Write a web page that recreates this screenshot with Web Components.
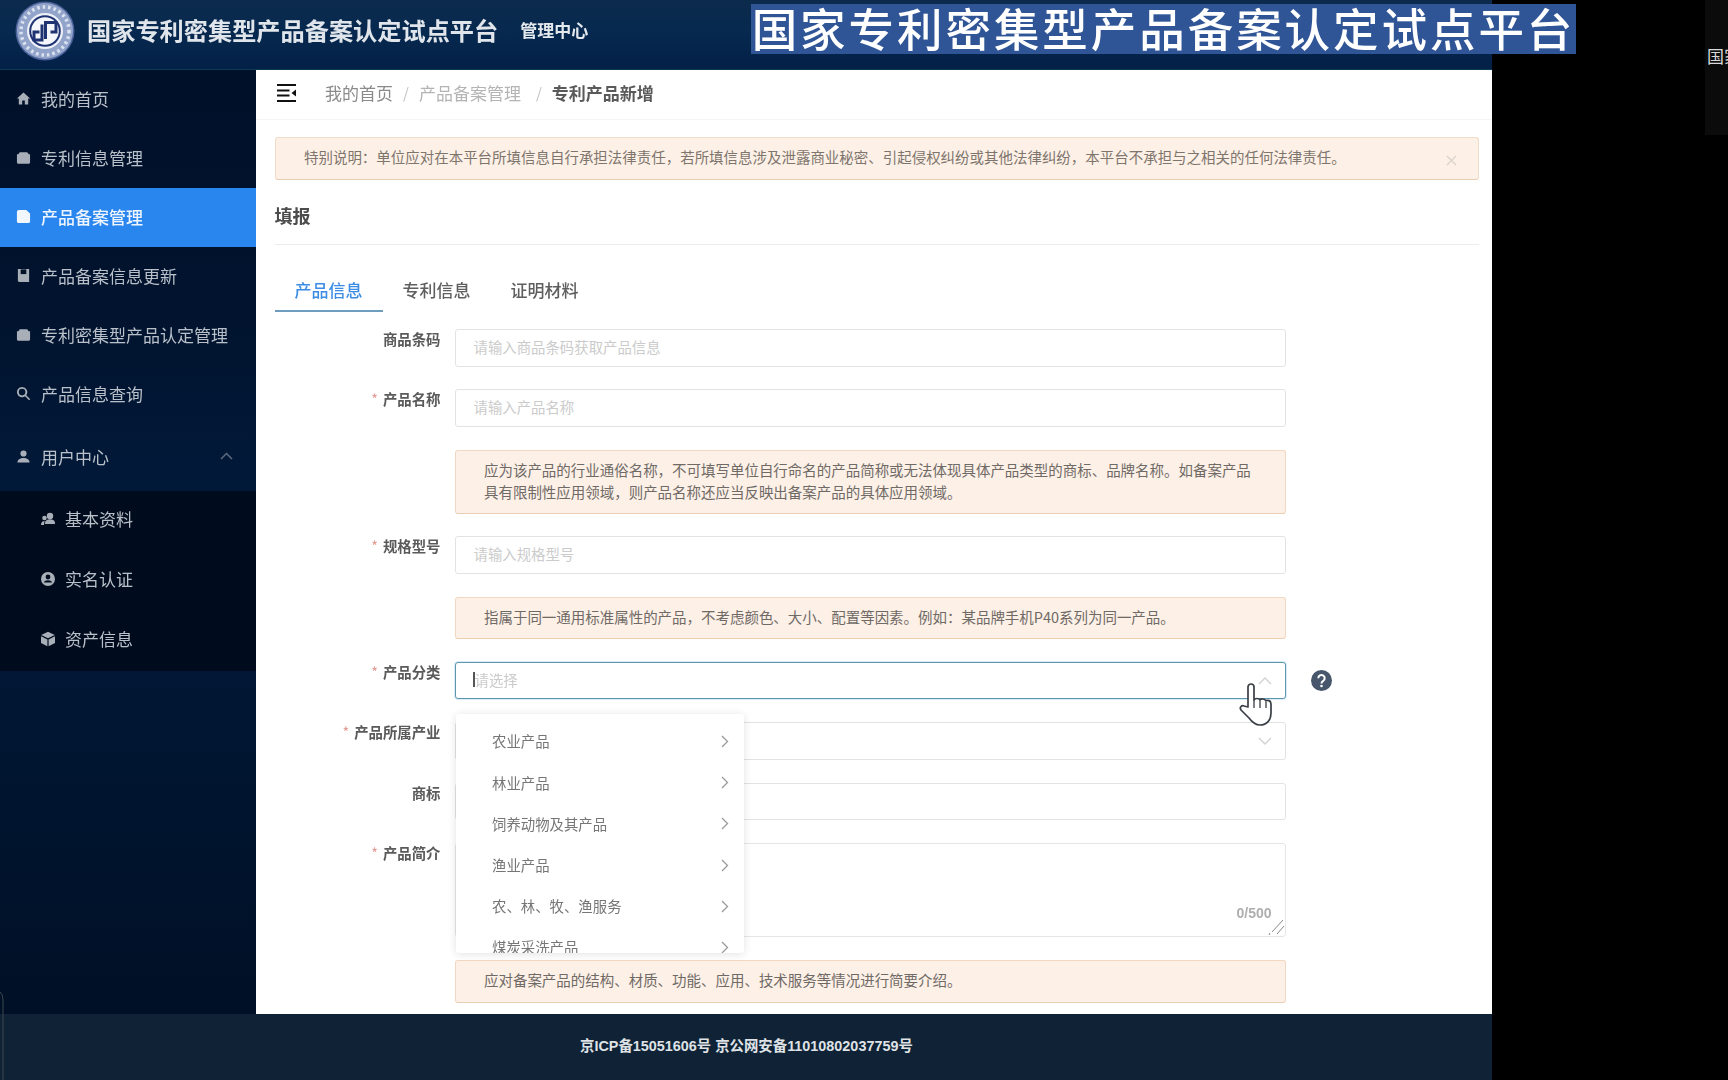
<!DOCTYPE html>
<html lang="zh-CN"><head><meta charset="utf-8"><title>专利产品新增</title>
<style>
html,body{margin:0;padding:0;background:#000;height:100%;overflow:hidden}
body{font-family:"Noto Sans CJK SC","Noto Sans",sans-serif}
</style></head>
<body>
<app-shell>
  <top-bar slot="top"></top-bar>
  <side-nav slot="side">
    <nav-item icon="home">我的首页</nav-item>
    <nav-item icon="box">专利信息管理</nav-item>
    <nav-item icon="doc" active>产品备案管理</nav-item>
    <nav-item icon="book">产品备案信息更新</nav-item>
    <nav-item icon="box">专利密集型产品认定管理</nav-item>
    <nav-item icon="search">产品信息查询</nav-item>
    <nav-item icon="user" tall open>用户中心</nav-item>
    <nav-group>
      <nav-item icon="users" sub>基本资料</nav-item>
      <nav-item icon="account" sub>实名认证</nav-item>
      <nav-item icon="cube" sub>资产信息</nav-item>
    </nav-group>
  </side-nav>
  <main-pane slot="main">
    <bread-bar></bread-bar>
    <notice-bar>特别说明&#xFF1A;单位应对在本平台所填信息自行承担法律责任&#xFF0C;若所填信息涉及泄露商业秘密、引起侵权纠纷或其他法律纠纷&#xFF0C;本平台不承担与之相关的任何法律责任。</notice-bar>
    <section-title>填报</section-title>
    <tab-strip></tab-strip>
    <form-stack>
      <form-row label="商品条码"><text-field placeholder="请输入商品条码获取产品信息"></text-field></form-row>
      <form-row label="产品名称" required><text-field placeholder="请输入产品名称"></text-field></form-row>
      <form-row><hint-box style="height:64px">应为该产品的行业通俗名称&#xFF0C;不可填写单位自行命名的产品简称或无法体现具体产品类型的商标、品牌名称。如备案产品具有限制性应用领域&#xFF0C;则产品名称还应当反映出备案产品的具体应用领域。</hint-box></form-row>
      <form-row label="规格型号" required><text-field placeholder="请输入规格型号"></text-field></form-row>
      <form-row><hint-box style="height:42.5px">指属于同一通用标准属性的产品&#xFF0C;不考虑颜色、大小、配置等因素。例如&#xFF1A;某品牌手机P40系列为同一产品。</hint-box></form-row>
      <form-row label="产品分类" required help><text-field placeholder="请选择" focused chevron="up"></text-field></form-row>
      <form-row label="产品所属产业" required><text-field chevron="down"></text-field></form-row>
      <form-row label="商标"><text-field></text-field></form-row>
      <form-row label="产品简介" required><area-field></area-field></form-row>
      <form-row><hint-box style="height:43px">应对备案产品的结构、材质、功能、应用、技术服务等情况进行简要介绍。</hint-box></form-row>
    </form-stack>
    <cascader-panel></cascader-panel>
    <hand-cursor></hand-cursor>
  </main-pane>
  <site-footer slot="foot">京ICP备15051606号 京公网安备11010802037759号</site-footer>
  <caption-strip slot="over">国家专利密集型产品备案认定试点平台</caption-strip>
  <side-peek slot="over"></side-peek>
</app-shell>
<script>
const FONT='"Noto Sans CJK SC","Noto Sans",sans-serif';
const CONDENSED='"Liberation Sans","Noto Sans CJK SC",sans-serif';
function def(name,html){
  customElements.define(name,class extends HTMLElement{
    constructor(){super();this.attachShadow({mode:'open'});
      if(typeof html!=='function')this.shadowRoot.innerHTML=html;}
    connectedCallback(){
      if(typeof html==='function'&&!this._d){this._d=1;this.shadowRoot.innerHTML=html(this);}
    }
  });
}
const ICONS={
 home:'<path d="M8 1.500 1 8h2v6.500h3.600V10h2.800v4.500H13V8h2z"/>',
 box:'<path d="M2.500 4.500 4 2.500h8l1.500 2H15V13a1.600 1.600 0 0 1-1.600 1.600H2.600A1.600 1.600 0 0 1 1 13V4.500z"/>',
 doc:'<path d="M3 1h8l4 3.800V13a2 2 0 0 1-2 2H3a2 2 0 0 1-2-2V3a2 2 0 0 1 2-2z"/>',
 book:'<path d="M2 1h12v14H4a2 2 0 0 1-2-2z"/><rect x="5" y="1.500" width="6" height="5" fill="#021129"/>',
 search:'<path fill-rule="evenodd" d="M6.500 1a5.500 5.500 0 0 1 4.400 8.800l4.300 4.200-1.300 1.300-4.200-4.300A5.500 5.500 0 1 1 6.500 1zm0 2a3.500 3.500 0 1 0 0 7 3.500 3.500 0 0 0 0-7z"/>',
 user:'<circle cx="8" cy="4.800" r="3.300"/><path d="M1.500 14.500c0-3.300 2.800-5 6.500-5s6.500 1.700 6.500 5z"/>',
 users:'<circle cx="10" cy="5" r="3.200"/><path d="M5 12c0-2.600 2.200-3.800 5-3.800s5 1.200 5 3.800v1H5z"/><circle cx="4.500" cy="7" r="2.300"/><path d="M1 14c0-2.500 1.400-4 3.500-4L4 14z"/>',
 account:'<path fill-rule="evenodd" d="M8 1a7 7 0 1 1 0 14A7 7 0 0 1 8 1zm0 2.600a2.400 2.400 0 1 0 0 4.800 2.400 2.400 0 0 0 0-4.800zM3.800 11.600h8.400C11.500 10 10 9.300 8 9.300s-3.500.7-4.200 2.300z"/>',
 cube:'<path d="M8 .8 14.800 4 8 7.300 1.200 4z"/><path d="M1 5.200 7.400 8.400v6.800L1 12z"/><path d="M15 5.200 8.600 8.400v6.800L15 12z"/>'
};
def('app-shell',`<style>
:host{display:grid;width:1492px;height:1080px;grid-template-columns:255.5px 1fr;grid-template-rows:70px 944px 66px;position:relative;filter:blur(.4px)}
::slotted([slot=top]){grid-column:1/3}
::slotted([slot=foot]){grid-column:1/3}
</style><slot name="top"></slot><slot name="side"></slot><slot name="main"></slot><slot name="foot"></slot><slot name="over"></slot>
<svg style="position:absolute;left:0;top:990px" width="5" height="90"><path d="M0 2Q3 4 3 10V90" fill="none" stroke="#3c4650"/></svg>`);
def('top-bar',`<style>
:host{display:flex;align-items:center;background:linear-gradient(180deg,#0c2a4c 0%,#07294f 45%,#032047 100%);color:#e8edf2;padding:0 0 8px 15px;box-sizing:border-box;border-bottom:1px solid #0b3a55}
.t{font:700 24.200px/1 ${FONT};margin-left:12px;white-space:nowrap;color:#dfe5ea}
.s{font:700 17px/1 ${FONT};margin:0 0 3px 22px;white-space:nowrap;color:#e4e9ee}
svg{flex:none}
</style>
<svg width="60" height="60" viewBox="0 0 60 60"><circle cx="30" cy="30" r="29.500" fill="#4a6199"/><circle cx="30" cy="30" r="28" fill="#93a4cb"/><circle cx="30" cy="30" r="24" fill="none" stroke="#dbe2f0" stroke-width="3.500" stroke-dasharray="2.500 3"/><circle cx="30" cy="30" r="18" fill="#eef1f8"/><circle cx="30" cy="30" r="15.800" fill="#1f3272"/><circle cx="30" cy="30" r="13.800" fill="#f4f6fb"/><path d="M30.500 38V21.500H41V31H35.500M27 23.500V39H19V31H24.500" fill="none" stroke="#1f3272" stroke-width="3"/></svg>
<span class="t">国家专利密集型产品备案认定试点平台</span><span class="s">管理中心</span>`);
def('side-nav',`<style>
:host{display:block;background:linear-gradient(180deg,#011029 0%,#01132e 25%,#011a3b 48%,#001026 100%);overflow:hidden}
</style><slot></slot>`);
def('nav-group',`<style>:host{display:block;background:#000c1d}</style><slot></slot>`);
def('nav-item',h=>{
 const sub=h.hasAttribute('sub'),act=h.hasAttribute('active'),tall=h.hasAttribute('tall'),open=h.hasAttribute('open');
 const ic=ICONS[h.getAttribute('icon')]||'';
 return `<style>
:host{display:flex;align-items:center;height:${tall?67:sub?60:59}px;box-sizing:border-box;padding:0 0 ${sub?5:2}px ${sub?40:16}px;color:${act?'#eef5fe':'#b9c0c9'};background:${act?'#2a86ef':'transparent'};font:${act?500:400} 17px/1 ${FONT};position:relative;white-space:nowrap}
svg.i{width:${sub?16:15}px;height:${sub?16:15}px;fill:${act?'#f2f7fd':'#a9afb8'};flex:none;margin-right:${sub?9:10}px}
svg.c{position:absolute;right:23px;top:28px}
</style><svg class="i" viewBox="0 0 16 16">${ic}</svg><slot></slot>${open?'<svg class="c" width="13" height="8" viewBox="0 0 13 8"><path d="M1 7l5.500-5.500L12 7" fill="none" stroke="#5b6a80" stroke-width="1.500"/></svg>':''}`;
});
def('main-pane',`<style>
:host{display:block;background:#fff;position:relative;overflow:hidden;padding:0 13px 0 19px;box-sizing:border-box}
</style><slot></slot>`);
def('bread-bar',`<style>
:host{display:flex;align-items:center;height:50px;margin:0 -13px 0 -19px;padding:0 0 5px 21.500px;border-bottom:1px solid #f5f5f5;font:400 17px/1 ${FONT};color:#8b8b8b;white-space:nowrap;box-sizing:border-box}
svg{margin:2px 29px 0 0;flex:none}
.m{color:#b4b4b4}.sep{color:#c2c2c2;margin:0 10px;font-size:15px}.sep2{margin:0 10px 0 15px}
b{font-weight:700;color:#5a5a5a}
</style>
<svg width="19" height="19" viewBox="0 0 19 19"><path d="M0 1h19M0 6.500h12.500M0 11.500h12.500M0 17h19" stroke="#111" stroke-width="1.800" fill="none"/><path d="M19 5.500v7l-4.500-3.500z" fill="#111"/></svg>
<span>我的首页</span><span class="sep">/</span><span class="m">产品备案管理</span><span class="sep sep2">/</span><b>专利产品新增</b>`);
def('notice-bar',`<style>
:host{display:flex;align-items:center;height:43px;margin:16.500px 0 0;padding:0 22px 2px 28.500px;box-sizing:border-box;background:#fdf0e6;border:1px solid #f1dcc8;border-bottom-color:#e8cdb4;border-radius:3px;font:400 14.480px/1 ${FONT};color:#7e756d;white-space:nowrap;position:relative}
i{position:absolute;right:21px;top:15px;width:11px;height:11px}
</style><slot></slot><i><svg width="11" height="11" viewBox="0 0 11 11"><path d="M1 1l9 9M10 1l-9 9" stroke="#d9d2cb" stroke-width="1.200"/></svg></i>`);
def('section-title',`<style>
:host{display:block;height:65px;box-sizing:border-box;border-bottom:1px solid #ececec;padding-top:25px;font:700 18px/1.200 ${FONT};color:#4c4c4c}
</style><slot></slot>`);
def('tab-strip',`<style>
:host{display:flex;height:66.500px;box-sizing:border-box;padding-top:32px;font:500 17px/26px ${FONT};color:#5f5f5f;white-space:nowrap}
span{display:block;padding:0 20px;height:33px;box-sizing:content-box}
.a{color:#3a8ce4;border-bottom:2px solid #6f9dbf}
</style><span class="a">产品信息</span><span>专利信息</span><span>证明材料</span>`);
def('form-stack',`<style>:host{display:flex;flex-direction:column;gap:22.800px;margin-top:18px;width:1011px}</style><slot></slot>`);
def('form-row',h=>{
 const l=h.getAttribute('label');
 return `<style>
:host{display:grid;grid-template-columns:166px 831px;column-gap:14px;position:relative}
.l{text-align:right;font:700 14.400px/20px ${FONT};color:#5a5a5a;white-space:nowrap}
.r{color:#e59a93;margin-right:5px;font-weight:400}
.h{position:absolute;left:1036px;top:8px}
</style><div class="l">${h.hasAttribute('required')?'<span class="r">*</span>':''}${l||''}</div><slot></slot>
${h.hasAttribute('help')?'<svg class="h" width="21" height="21" viewBox="0 0 21 21"><circle cx="10.500" cy="10.500" r="10.500" fill="#48566c"/><path d="M7.300 8.200a3.200 3.200 0 1 1 4.900 2.700c-1.100.7-1.700 1.200-1.700 2.500" fill="none" stroke="#fff" stroke-width="2"/><circle cx="10.500" cy="16" r="1.300" fill="#fff"/></svg>':''}`;
});
def('text-field',h=>{
 const f=h.hasAttribute('focused'),c=h.getAttribute('chevron'),p=h.getAttribute('placeholder')||'';
 return `<style>
:host{display:flex;align-items:center;height:37.500px;box-sizing:border-box;border:1px solid ${f?'#5f95ad':'#e3e3e3'};border-radius:3px;background:#fff;padding:0 0 2px ${f?17:18}px;font:400 14.400px/1 ${FONT};color:#cbcbcb;position:relative;white-space:nowrap;${f?'box-shadow:0 0 0 1px #d9edf7;':''}}
.car{width:2px;height:15px;background:#555;flex:none}
svg{position:absolute;right:13px;top:14px}
</style>${f?'<span class="car"></span>':''}<span>${p}</span>
${c?`<svg width="14" height="8" viewBox="0 0 14 8"><path d="${c==='up'?'M1 7l6-6 6 6':'M1 1l6 6 6-6'}" fill="none" stroke="#d2d2d2" stroke-width="1.400"/></svg>`:''}`;
});
def('area-field',`<style>
:host{display:block;height:94px;box-sizing:border-box;border:1px solid #e6e6e6;border-radius:3px;position:relative;background:#fff}
span{position:absolute;right:13px;bottom:16px;font:700 14px/1 "Liberation Sans",sans-serif;color:#aeaeae}
svg{position:absolute;right:0;bottom:0}
</style><span>0/500</span><svg width="18" height="18" viewBox="0 0 18 18"><path d="M16 2 5 14M17 8l-7 8M2 17l1-2" stroke="#888" stroke-width="1" fill="none"/></svg>`);
def('hint-box',`<style>
:host{display:flex;align-items:center;box-sizing:border-box;padding:0 28.500px 2px;background:#fdf0e6;border:1px solid #f0d8c2;border-bottom-color:#eacdb3;border-radius:3px;font:400 14.480px/21.500px ${FONT};color:#6f6a66}
</style><div><slot></slot></div>`);
const cats=['农业产品','林业产品','饲养动物及其产品','渔业产品','农、林、牧、渔服务','煤炭采洗产品'];
def('cascader-panel',`<style>
:host{display:block;position:absolute;left:200.500px;top:644px;width:288px;height:239px;background:#fff;box-shadow:0 1px 8px rgba(0,0,0,.12);border-radius:3px;overflow:hidden;padding-top:7px;box-sizing:border-box}
div{display:flex;align-items:center;justify-content:space-between;height:41.200px;padding:0 15px 0 36px;font:400 14.400px/1 ${FONT};color:#767676;white-space:nowrap}
</style>`+cats.map(c=>`<div><span>${c}</span><svg width="8" height="13" viewBox="0 0 8 13"><path d="M1 1l5.500 5.500L1 12" fill="none" stroke="#9a9a9a" stroke-width="1.300"/></svg></div>`).join(''));
def('hand-cursor',`<style>:host{display:block;position:absolute;left:981px;top:613px;width:36px;height:44px}</style>
<svg width="36" height="44" viewBox="0 0 36 44"><path d="M11 24V4a3 3 0 0 1 6 0v13c1-2 5-2 6 0 1-1.500 5-1.500 6 1 1-1 5-1 5 3v9c0 7-4 12-11 12-5 0-8-3-11-7l-8-8c-2-3 1-5 3-4z" fill="#fff" stroke="#3a3f45" stroke-width="1.700" stroke-linejoin="round"/><path d="M17 17v8M23 18v7M29 19v6" stroke="#3a3f45" stroke-width="1.300"/></svg>`);
def('site-footer',`<style>:host{display:flex;align-items:center;background:#102236;color:#dfe3e6;font:700 14.400px/1 ${CONDENSED};padding-left:580px;white-space:nowrap;box-sizing:border-box;padding-bottom:1px}</style><slot></slot>`);
def('caption-strip',`<style>:host{position:absolute;left:751px;top:3.500px;width:825px;height:50px;background:#2f5596;color:#fff;font:500 45.500px/47px ${FONT};letter-spacing:2.950px;white-space:nowrap;text-align:center}</style><slot></slot>`);
def('side-peek',`<style>:host{position:absolute;left:1705px;top:0;width:23px;height:135px;background:#0b0b0b;color:#d9d9d9;font:400 17px/1 ${FONT};overflow:hidden;white-space:nowrap;padding-top:47px;padding-left:2px;box-sizing:border-box}</style>国家专利`);
</script>
</body></html>
